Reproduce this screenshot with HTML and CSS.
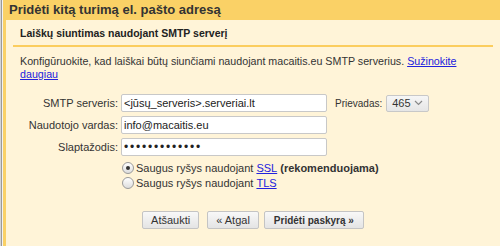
FILE: index.html
```html
<!DOCTYPE html>
<html lang="lt">
<head>
    <meta charset="utf-8">
    <title>Pridėti kitą el. pašto adresą</title>
    <link rel="stylesheet" href="styles.css">
</head>
<body>
    <div class="page">
        <div class="edge"></div>
        <div class="dialog">
            <h1 class="dialog-title">Pridėti kitą turimą el. pašto adresą</h1>
            <div class="dialog-body">
                <h2 class="section-title">Laiškų siuntimas naudojant SMTP serverį</h2>
                <p class="intro">Konfigūruokite, kad laiškai būtų siunčiami naudojant macaitis.eu SMTP serverius. <a href="#">Sužinokite daugiau</a></p>

                <div class="form">
                    <div class="row">
                        <label class="label">SMTP serveris:</label>
                        <input class="field" type="text" value="&lt;jūsų_serveris&gt;.serveriai.lt">
                        <span class="port-label">Prievadas:</span>
                        <span class="select">465 <svg width="9" height="6" viewBox="0 0 9 6"><path d="M1 1 L4.5 4.5 L8 1" fill="none" stroke="#888" stroke-width="1.2"/></svg></span>
                    </div>
                    <div class="row">
                        <label class="label">Naudotojo vardas:</label>
                        <input class="field" type="text" value="info@macaitis.eu">
                    </div>
                    <div class="row">
                        <label class="label">Slaptažodis:</label>
                        <input class="field pass" type="password" value="aaaaaaaaaaaaa">
                    </div>
                    <div class="options">
                        <label class="option"><span class="radio on"></span>Saugus ryšys naudojant <a href="#">SSL</a> <b>(rekomenduojama)</b></label>
                        <label class="option"><span class="radio"></span>Saugus ryšys naudojant <a href="#">TLS</a></label>
                    </div>
                </div>

                <div class="buttons">
                    <button class="btn cancel">Atšaukti</button>
                    <button class="btn back">« Atgal</button>
                    <button class="btn primary">Pridėti paskyrą »</button>
                </div>
            </div>
        </div>
    </div>
</body>
</html>
```

FILE: styles.css
```css
body {
    margin: 0;
    padding: 0;
    font-family: "Liberation Sans", Arial, sans-serif;
    font-size: 11px;
    color: #222;
}

.page {
    display: flex;
    height: 246px;
    overflow: hidden;
}

.edge {
    width: 1px;
    border-left: 1px solid #d4d4d4;
    border-right: 1px solid #f2f2f2;
    background-color: #9a9a9a;
}

.dialog {
    flex: 1;
    display: flex;
    flex-direction: column;
    background-color: #fff4d8;
}

.dialog-title {
    margin: 0;
    height: 20px;
    padding-left: 6px;
    background-color: #fad166;
    color: #333;
    font-size: 13px;
    line-height: 20px;
    font-weight: bold;
}

.dialog-body {
    flex: 1;
    border-left: 3px solid #fad166;
    padding: 0 7px;
}

.section-title {
    margin: 0;
    padding: 6px 0 5px 7px;
    border-bottom: 2px solid #fbcd5e;
    font-size: 10.5px;
    line-height: 14px;
    color: #222;
}

.intro {
    margin: 0;
    padding: 8px 0 0 7px;
    font-size: 10.7px;
    line-height: 13px;
    color: #333;
}

.intro a, .option a {
    color: #2222dd;
}

.form {
    margin-top: 13px;
    display: flex;
    flex-direction: column;
    gap: 4px;
}

.row {
    display: flex;
    align-items: center;
}

.label {
    width: 105px;
    text-align: right;
    color: #333;
}

.field {
    margin: 0 0 0 3px;
    width: 200px;
    height: 14px;
    padding: 1px 2px;
    border: 1px solid #c8c8c8;
    border-radius: 2px;
    background: #fff;
    font-family: "Liberation Sans", Arial, sans-serif;
    font-size: 11px;
    color: #222;
}

.pass {
    font-size: 12px;
    letter-spacing: 1.8px;
}

.port-label {
    margin-left: 8px;
    font-size: 10px;
    color: #333;
}

.select {
    margin-left: 4px;
    display: flex;
    align-items: center;
    gap: 3px;
    height: 15px;
    padding: 0 5px;
    border: 1px solid #c8c8c8;
    border-radius: 2px;
    background: linear-gradient(#f6f6f6, #e6e6e6);
    color: #333;
}

.options {
    margin-left: 109px;
    display: flex;
    flex-direction: column;
}

.option {
    display: flex;
    align-items: center;
    height: 15px;
    color: #333;
}

.option a {
    margin: 0 3px;
}

.radio {
    width: 10px;
    height: 10px;
    margin-right: 2px;
    border: 1px solid #9a9a9a;
    border-radius: 50%;
    background: linear-gradient(#fff, #ddd);
    position: relative;
}

.radio.on::after {
    content: "";
    position: absolute;
    left: 3px;
    top: 3px;
    width: 4px;
    height: 4px;
    border-radius: 50%;
    background: #333;
}

.buttons {
    margin-top: 21px;
    display: flex;
    justify-content: center;
}

.btn {
    height: 18px;
    padding: 0 8px;
    border: 1px solid #c4c4c4;
    border-radius: 2px;
    background: linear-gradient(#f8f8f8, #e4e4e4);
    font-family: "Liberation Sans", Arial, sans-serif;
    font-size: 11px;
    color: #333;
}

.cancel {
    margin-right: 8px;
}

.back {
    margin-right: 5px;
}

.primary {
    padding: 0 9px;
    font-size: 10px;
    font-weight: bold;
}
```
